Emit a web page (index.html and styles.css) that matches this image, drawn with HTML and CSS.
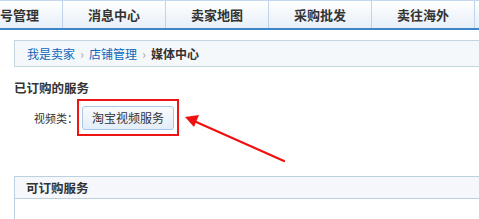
FILE: index.html
```html
<!DOCTYPE html>
<html lang="zh-CN">
<head>
<meta charset="utf-8">
<title>媒体中心</title>
<link rel="stylesheet" href="styles.css">
</head>
<body>
<div class="tabs">
  <div class="tab tab-first">号管理</div>
  <div class="tab">消息中心</div>
  <div class="tab">卖家地图</div>
  <div class="tab">采购批发</div>
  <div class="tab">卖往海外</div>
  <div class="tab tab-last"></div>
</div>
<div class="main">
  <div class="crumb">
    <a class="crumb-link" href="#">我是卖家</a><span class="sep">›</span><a class="crumb-link" href="#">店铺管理</a><span class="sep">›</span><span class="crumb-cur">媒体中心</span>
  </div>
  <h3 class="sec-title">已订购的服务</h3>
  <div class="svc-row">
    <span class="svc-label">视频类：</span>
    <span class="mark"><button class="svc-btn" type="button">淘宝视频服务</button></span>
  </div>
  <div class="panel">
    <div class="panel-hd">可订购服务</div>
    <div class="panel-bd"></div>
  </div>
</div>
<svg class="arrow" width="479" height="219" viewBox="0 0 479 219">
  <line x1="284" y1="161" x2="194" y2="121" stroke="#f01010" stroke-width="2.2" stroke-linecap="round"/>
  <polygon points="185,117 199,115 194,127" fill="#f01010"/>
</svg>
</body>
</html>
```
FILE: styles.css
```css
html, body {
  margin: 0;
  padding: 0;
  background: #fff;
}
body {
  width: 479px;
  height: 219px;
  overflow: hidden;
  position: relative;
  font-family: "Noto Sans CJK SC", "Noto Sans", sans-serif;
  font-size: 12px;
  color: #333;
}
.tabs {
  display: flex;
  height: 27px;
  border-top: 1px solid #c4d8ee;
  border-bottom: 2px solid #3c86c7;
  white-space: nowrap;
  overflow: hidden;
}
.tab {
  flex: 0 0 102px;
  border-right: 1px solid #bfd4ea;
  background: linear-gradient(#ffffff, #e7eff8);
  text-align: center;
  line-height: 27px;
  font-size: 13px;
  font-weight: bold;
  color: #333;
}
.tab-first {
  flex: 0 0 61px;
  box-sizing: border-box;
  text-align: right;
  padding-right: 23px;
}
.tab-last {
  flex: 1 1 auto;
  border-right: none;
}
.main {
  padding-left: 14px;
  padding-top: 10px;
}
.crumb {
  height: 25px;
  line-height: 25px;
  border: 1px solid #c3d5e1;
  border-right: none;
  background: #f5f8fb;
  padding-left: 12px;
  display: flex;
  align-items: center;
}
.crumb-link {
  color: #0b67b9;
  text-decoration: none;
}
.sep {
  display: inline-block;
  width: 14px;
  text-align: center;
  color: #a0a0a0;
  font-size: 12px;
}
.crumb-cur {
  font-weight: bold;
  color: #333;
}
.sec-title {
  margin: 12px 0 0;
  font-size: 12.5px;
  line-height: 18px;
  font-weight: bold;
  color: #333;
}
.svc-row {
  display: flex;
  align-items: center;
  margin-top: 2px;
  padding-left: 20px;
}
.svc-label {
  font-size: 11px;
  line-height: 16px;
  width: 43px;
  white-space: nowrap;
  color: #333;
}
.mark {
  display: inline-flex;
  border: 2px solid #ee1414;
  padding: 5px 3px 4px 3px;
}
.svc-btn {
  width: 92px;
  height: 24px;
  margin: 0;
  padding: 0;
  border: 1px solid #a9c6e9;
  border-radius: 3px;
  background: linear-gradient(#f9fbfe, #e3eef9);
  font-family: "Noto Sans CJK SC", "Noto Sans", sans-serif;
  font-size: 12px;
  line-height: 22px;
  color: #333;
}
.panel {
  margin-top: 40px;
  border-left: 1px solid #bcd1e0;
  border-top: 1px solid #bcd1e0;
  height: 42px;
}
.panel-hd {
  height: 21px;
  line-height: 21px;
  padding-left: 11px;
  background: #f5f7fb;
  border-bottom: 1px solid #bcd1e0;
  font-weight: bold;
  font-size: 12.5px;
  color: #333;
}
.arrow {
  position: absolute;
  left: 0;
  top: 0;
  pointer-events: none;
}
```
